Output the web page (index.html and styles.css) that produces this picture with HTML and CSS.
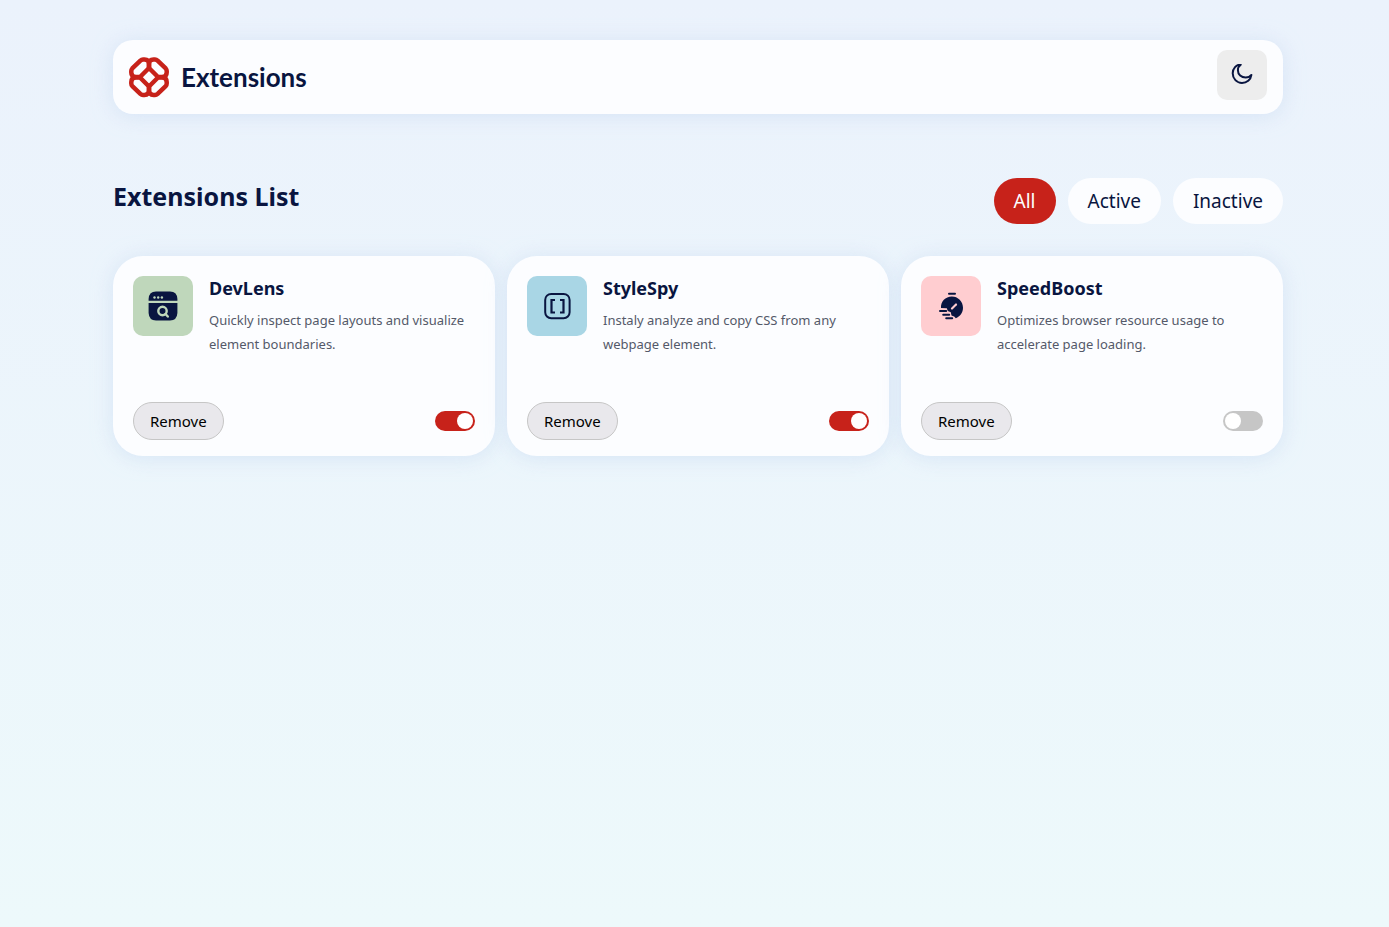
FILE: index.html
```html
<!DOCTYPE html>
<html lang="en">
<head>
<meta charset="utf-8">
<meta name="viewport" content="width=device-width, initial-scale=1">
<title>Extensions</title>
<link rel="stylesheet" href="styles.css">
</head>
<body>
<div class="page">
  <header class="header">
    <a class="logo" href="#">
      <svg class="logo-mark" viewBox="0 0 40 40" aria-hidden="true">
        <defs><path id="link" d="M20 11 11 20H7Q2.300 20 2.300 15.500V14Q2.300 12.500 3.300 11.400L11.400 3.600Q12.500 2.600 14 2.600H15.500Q20 2.600 20 7Z"/></defs>
        <g fill="none" stroke="#c7221a" stroke-width="4.500" stroke-linejoin="round">
          <use href="#link"/>
          <use href="#link" transform="matrix(-1 0 0 1 40 0)"/>
          <use href="#link" transform="matrix(1 0 0 -1 0 40.500)"/>
          <use href="#link" transform="matrix(-1 0 0 -1 40 40.500)"/>
        </g>
      </svg>
      <span class="logo-text">Extensions</span>
    </a>
    <button class="theme-button" type="button" aria-label="Toggle dark theme">
      <svg width="22" height="22" viewBox="0 1 22 22" fill="none" stroke="#091540" stroke-width="2" stroke-linejoin="round" aria-hidden="true"><path d="M9.700 1.600C5.200 1.500 1.700 5.500 1.700 10.300C1.700 15.700 5.800 20 11 20C15.700 20 19.800 16.800 20.400 11.900C18.900 13.800 17 14.500 14.700 14.500C10.300 14.500 6.900 11.400 6.900 7.200C6.900 4.900 7.900 2.900 9.700 1.600Z"/></svg>
    </button>
  </header>
  <main>
    <div class="toolbar">
      <h1 class="title">Extensions List</h1>
      <div class="filters">
        <button class="filter filter-active" type="button">All</button>
        <button class="filter" type="button">Active</button>
        <button class="filter" type="button">Inactive</button>
      </div>
    </div>
    <section class="cards">
      <article class="card">
        <div class="card-body">
          <div class="icon icon-green">
            <svg width="30" height="30" viewBox="0 0 30 30" aria-hidden="true"><path fill="#091540" d="M.6 9.800V8Q1 .6 8 .6H22Q29 .6 29.400 8V9.800ZM.6 12H29.400V22Q29 29.400 22 29.400H8Q1 29.400 .6 22Z"/><g fill="#bfd7bb"><circle cx="6.500" cy="6.500" r="1.200"/><circle cx="10.200" cy="6.500" r="1.200"/><circle cx="13.900" cy="6.500" r="1.200"/></g><g fill="none" stroke="#bfd7bb" stroke-width="2.400"><circle cx="14.500" cy="20" r="4.200"/><path d="m17.500 23 2.300 2.500" stroke-linecap="round"/></g></svg>
          </div>
          <div><h2 class="card-title">DevLens</h2><p class="card-text">Quickly inspect page layouts and visualize element boundaries.</p></div>
        </div>
        <div class="card-footer">
          <button class="remove" type="button">Remove</button>
          <input class="switch" type="checkbox" role="switch" aria-label="Enable DevLens" checked>
        </div>
      </article>
      <article class="card">
        <div class="card-body">
          <div class="icon icon-blue">
            <svg width="30" height="30" viewBox="0 0 30 30" fill="none" stroke="#091540" stroke-width="2" aria-hidden="true"><rect x="3.200" y="2.900" width="24.400" height="24.400" rx="6"/><path d="M13 9H9.500V21.500H13M18 9H21.500V21.500H18" stroke-width="2.200"/></svg>
          </div>
          <div><h2 class="card-title">StyleSpy</h2><p class="card-text">Instaly analyze and copy CSS from any webpage element.</p></div>
        </div>
        <div class="card-footer">
          <button class="remove" type="button">Remove</button>
          <input class="switch" type="checkbox" role="switch" aria-label="Enable StyleSpy" checked>
        </div>
      </article>
      <article class="card">
        <div class="card-body">
          <div class="icon icon-pink">
            <svg width="30" height="30" viewBox="0 0 30 30" aria-hidden="true"><path fill="#091540" d="M5 17C4.500 10.500 9.500 5.500 15.800 5.500C22 5.500 27 10.400 27 16.700C27 21.500 24 25.500 19.800 27.200L18.200 25.400 15.500 24.500 14.800 21.200 11.800 20 10.800 17.200Z"/><g fill="none" stroke="#091540" stroke-width="2" stroke-linecap="round"><path d="M13 2.800H19M4 20H10.200M7.200 23.700H13.200M10.200 27.200H16.200"/></g><path d="m16 17.500 4-4" stroke="#ffcdd0" stroke-width="2.200" stroke-linecap="round"/></svg>
          </div>
          <div><h2 class="card-title">SpeedBoost</h2><p class="card-text">Optimizes browser resource usage to accelerate page loading.</p></div>
        </div>
        <div class="card-footer">
          <button class="remove" type="button">Remove</button>
          <input class="switch" type="checkbox" role="switch" aria-label="Enable SpeedBoost">
        </div>
      </article>
    </section>
  </main>
</div>
</body>
</html>
```

FILE: styles.css
```css
* {
  box-sizing: border-box;
}

body {
  margin: 0;
  min-height: 100vh;
  background: linear-gradient(180deg, #ebf2fc 0%, #edf9fb 100%);
  color: #091540;
  font-family: "Noto Sans", sans-serif;
}

button {
  font-family: inherit;
  cursor: pointer;
}

.page {
  padding: 40px 106px 40px 113px;
}

.header {
  display: flex;
  justify-content: space-between;
  align-items: flex-start;
  padding: 10px 16px 14px;
  border-radius: 20px;
  background: #fcfdff;
  box-shadow: 0 2px 20px #c8daf299;
}

.logo {
  display: flex;
  align-items: center;
  gap: 12px;
  padding-top: 7px;
  color: inherit;
  text-decoration: none;
}

.logo-mark {
  width: 40px;
  height: 40px;
  overflow: visible;
}

.logo-text {
  font-family: Lato, sans-serif;
  font-size: 26px;
  font-weight: 700;
  line-height: 40px;
}

.theme-button {
  display: grid;
  place-items: center;
  width: 50px;
  height: 50px;
  padding: 0;
  border: 0;
  border-radius: 10px;
  background: #ededed;
}

.toolbar {
  display: flex;
  justify-content: space-between;
  margin-top: 64px;
}

.title {
  margin: 0;
  font-size: 25px;
  font-weight: 700;
  line-height: 36px;
}

.filters {
  display: flex;
  gap: 12px;
}

.filter {
  height: 46px;
  padding: 0 20px;
  border: 0;
  border-radius: 23px;
  background: #fcfdff;
  color: #091540;
  font-size: 19px;
}

.filter-active {
  background: #c7221a;
  color: #fcfdff;
}

.cards {
  display: grid;
  grid-template-columns: repeat(3, 1fr);
  gap: 12px;
  margin-top: 32px;
}

.card {
  display: flex;
  flex-direction: column;
  justify-content: space-between;
  min-height: 200px;
  padding: 20px 20px 16px;
  border-radius: 30px;
  background: #fcfdff;
  box-shadow: 0 2px 20px #c8daf299;
}

.card-body {
  display: flex;
  gap: 16px;
}

.icon {
  display: grid;
  flex: none;
  place-items: center;
  width: 60px;
  height: 60px;
  border-radius: 10px;
}

.icon-green {
  background: #bfd7bb;
}

.icon-blue {
  background: #a9d6e5;
}

.icon-pink {
  background: #ffcdd0;
}

.card-title {
  margin: 0 0 8px;
  font-size: 18px;
  font-weight: 700;
  line-height: 24px;
}

.card-text {
  margin: 0;
  color: #545969;
  font-size: 13px;
  line-height: 24px;
}

.card-footer {
  display: flex;
  justify-content: space-between;
  align-items: center;
}

.remove {
  height: 38px;
  padding: 0 16px;
  border: 1px solid #c6c6c6;
  border-radius: 19px;
  background: #e9e8ec;
  color: #000;
  font-size: 15px;
}

.switch {
  display: flex;
  appearance: none;
  width: 40px;
  height: 20px;
  margin: 0;
  padding: 2px;
  border-radius: 10px;
  background: #c6c6c6;
  cursor: pointer;
}

.switch::before {
  width: 16px;
  height: 16px;
  border-radius: 50%;
  background: #fff;
  content: "";
}

.switch:checked {
  justify-content: flex-end;
  background: #c7221a;
}

@media (max-width: 1100px) {
  .page {
    padding: 24px;
  }

  .cards {
    grid-template-columns: repeat(auto-fill, minmax(300px, 1fr));
  }
}
```
